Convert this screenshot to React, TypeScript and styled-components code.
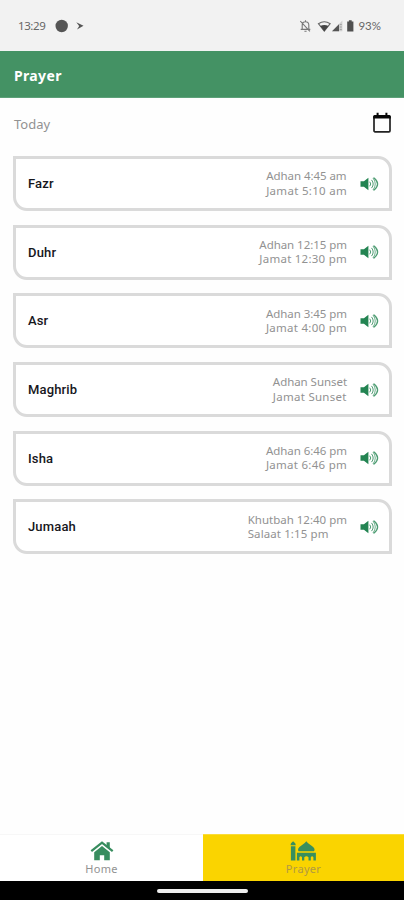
import React from "react";
import styled, { createGlobalStyle } from "styled-components";

const GlobalStyle = createGlobalStyle`
  * { box-sizing: border-box; }
  body { margin: 0; background: #fff; font-family: "Noto Sans", sans-serif; }
`;

const Screen = styled.div`
  width: 404px;
  height: 900px;
  display: flex;
  flex-direction: column;
  background: #fefefe;
  overflow: hidden;
`;

const StatusBar = styled.div`
  height: 51px;
  flex: none;
  display: flex;
  justify-content: space-between;
  align-items: center;
  padding: 1px 23px 0 18px;
  background: #f2f2f2;
  color: #666;
  font-size: 11.5px;
  line-height: 16px;
`;

const StatusGroup = styled.div`
  display: flex;
  align-items: center;
`;

const Clock = styled.span`
  width: 37px;
  letter-spacing: -0.4px;
`;

const Battery = styled.span`
  font-family: Lato, sans-serif;
`;

const Header = styled.header`
  height: 47px;
  flex: none;
  display: flex;
  align-items: center;
  padding: 2px 14px 0;
  background: #449264;
  border-bottom: 1px solid #5da179;
  color: #fff;
  font-size: 14px;
  font-weight: 700;
  letter-spacing: 0.35px;
`;

const DayRow = styled.div`
  height: 58px;
  flex: none;
  display: flex;
  justify-content: space-between;
  align-items: flex-start;
  padding: 14px 12px 0 14px;
`;

const DayLabel = styled.span`
  color: #929292;
  font-size: 13px;
  line-height: 24px;
`;

const PrayerList = styled.main`
  flex: 1;
  display: flex;
  flex-direction: column;
  gap: 13.7px;
  padding: 0 12px 0 13px;
`;

const Card = styled.section`
  height: 55px;
  flex: none;
  display: flex;
  align-items: center;
  padding: 0 10px 0 12px;
  border: 3px solid #dadada;
  border-radius: 0 14px 0 14px;
  background: #fff;
`;

const PrayerName = styled.h2`
  flex: 1;
  margin: 0;
  color: #16161c;
  font-family: Roboto, sans-serif;
  font-size: 13px;
  font-weight: 500;
  letter-spacing: 0.15px;
`;

const Times = styled.div`
  margin-right: 13px;
  color: #929292;
  font-size: 11.5px;
  line-height: 14.3px;
  white-space: nowrap;
`;

const TimeLine = styled.div<{ $tracking: number }>`
  letter-spacing: ${(p) => p.$tracking}px;
`;

const NavBar = styled.nav`
  height: 47px;
  flex: none;
  display: grid;
  grid-template-columns: 203px 201px;
`;

const NavItem = styled.div<{ $active?: boolean }>`
  display: flex;
  flex-direction: column;
  align-items: center;
  padding-top: 6px;
  background: ${(p) => (p.$active ? "#fad400" : "#fff")};
  border-top: 1px solid ${(p) => (p.$active ? "#fbdc38" : "#f7f7f7")};
  color: ${(p) => (p.$active ? "#b29a42" : "#929292")};
  font-size: 11px;
  line-height: 15px;
  letter-spacing: 0.3px;
`;

const GestureArea = styled.footer`
  height: 19px;
  flex: none;
  display: flex;
  justify-content: center;
  align-items: center;
  background: #000;
`;

const GesturePill = styled.div`
  width: 91px;
  height: 4px;
  border-radius: 2px;
  background: #eee;
`;

const NoticeIcons = () => (
  <svg width="30" height="14" viewBox="0 0 30 14">
    <circle cx="6.7" cy="7" r="6.2" fill="#555" />
    <path d="M21.3 3.2 28.5 6.8 22 10.6 24.2 7Z" fill="#555" />
  </svg>
);

const SystemIcons = () => (
  <svg width="58" height="14" viewBox="0 0 58 14">
    <g fill="none" stroke="#777" strokeWidth="1.1">
      <path d="M2.2 10.4V6a3.3 3.3 0 0 1 6.6 0v4.4M.7 10.4h9.6M5.5 1.2v1.6M4.4 12.2h2.2M.3 2l9.6 10.4" />
    </g>
    <path d="M18.4 4.7Q24.3.8 30.2 4.7L24.3 12.2Z" fill="#f2f2f2" stroke="#666" strokeWidth="1.1" />
    <path d="M20.2 6.9Q24.3 5 28.4 6.9L24.3 12.2Z" fill="#444" />
    <path d="M42.4 1.6 32 12.2h10.4Z" fill="#cfcfcf" />
    <path d="M39 5.2 32 12.2h7Z" fill="#555" />
    <path d="M39.8 5.5h2M39.8 8h2M39.8 10.5h2" stroke="#999" strokeWidth=".8" />
    <path d="M47.2 2.6h1.7V1.2h2.8v1.4h1.7v10h-6.2Z" fill="#505050" />
  </svg>
);

const CalendarIcon = () => (
  <svg width="20" height="22" viewBox="0 0 20 22">
    <rect x="2" y="4" width="16" height="15.8" rx="1" fill="none" stroke="#222" strokeWidth="1.7" />
    <path d="M1.2 6.6V4.6Q1.2 3 2.8 3H4.6V.8h2v2.2h6.8V.8h2v2.2h1.8q1.6 0 1.6 1.6v2Z" fill="#080808" />
  </svg>
);

const SpeakerIcon = () => (
  <svg width="19" height="14" viewBox="0 0 19 14">
    <path d="M.5 4.2h3.4L8.4.8v12.4L3.9 9.8H.5Z" fill="#238452" />
    <g fill="none" stroke="#4d9c72" strokeLinecap="round">
      <path d="M10 5q1.8 2 0 4" strokeWidth="1" />
      <path d="M11.8 3.2q3 3.8 0 7.6" strokeWidth="1" />
      <path d="M13.2 1.3q4.4 5.7 0 11.4" strokeWidth="0.8" />
      <path d="M14 1q7.2 6 0 12" strokeWidth="1.3" />
    </g>
  </svg>
);

const HomeIcon = () => (
  <svg width="24" height="20" viewBox="0 0 24 20">
    <path d="M1.3 10.2 12 1.6 22.7 10.2" fill="none" stroke="#388d5f" strokeWidth="2.2" />
    <path d="M16.6 1.2h3.2v7.2l-3.2-2.6Z" fill="#388d5f" />
    <path d="M4.2 11.2 12 5l7.8 6.2v8h-5.6v-5H9.8v5H4.2Z" fill="#388d5f" />
  </svg>
);

const MosqueIcon = () => (
  <svg width="27" height="20" viewBox="0 0 27 20">
    <g fill="#388f5d">
      <path d="M3.1.2Q6 2 5.8 4.2H.5Q.2 2 3.1.2ZM.9 5.2h4.5v14.2H.9Z" />
      <path d="M16.3.2Q17.5 2.2 21.2 4.4 26 7.6 24 10.2H8.6Q6.6 7.6 11.4 4.4 15.1 2.2 16.3.2Z" />
      <path d="M6.9 11.8h19v7.6h-2.5v-3.2q-1.3-1.8-2.6 0v3.2h-2.3v-3.2q-2.1-2-4.2 0v3.2H12v-3.2q-1.3-1.8-2.6 0v3.2H6.9Z" />
    </g>
  </svg>
);

type Line = [text: string, tracking: number];

const prayers: { name: string; lines: Line[] }[] = [
  { name: "Fazr", lines: [["Adhan 4:45 am", -0.05], ["Jamat 5:10 am", 0.3]] },
  { name: "Duhr", lines: [["Adhan 12:15 pm", -0.05], ["Jamat 12:30 pm", 0.25]] },
  { name: "Asr", lines: [["Adhan 3:45 pm", -0.05], ["Jamat 4:00 pm", 0.27]] },
  { name: "Maghrib", lines: [["Adhan Sunset", -0.05], ["Jamat Sunset", 0.27]] },
  { name: "Isha", lines: [["Adhan 6:46 pm", -0.05], ["Jamat 6:46 pm", 0.27]] },
  { name: "Jumaah", lines: [["Khutbah 12:40 pm", 0], ["Salaat 1:15 pm", 0.1]] },
];

export default function App() {
  return (
    <Screen>
      <GlobalStyle />
      <StatusBar>
        <StatusGroup>
          <Clock>13:29</Clock>
          <NoticeIcons />
        </StatusGroup>
        <StatusGroup>
          <SystemIcons />
          <Battery>93%</Battery>
        </StatusGroup>
      </StatusBar>
      <Header>Prayer</Header>
      <DayRow>
        <DayLabel>Today</DayLabel>
        <CalendarIcon />
      </DayRow>
      <PrayerList>
        {prayers.map(({ name, lines }) => (
          <Card key={name}>
            <PrayerName>{name}</PrayerName>
            <Times>
              {lines.map(([text, tracking]) => (
                <TimeLine key={text} $tracking={tracking}>{text}</TimeLine>
              ))}
            </Times>
            <SpeakerIcon />
          </Card>
        ))}
      </PrayerList>
      <NavBar>
        <NavItem><HomeIcon />Home</NavItem>
        <NavItem $active><MosqueIcon />Prayer</NavItem>
      </NavBar>
      <GestureArea><GesturePill /></GestureArea>
    </Screen>
  );
}
